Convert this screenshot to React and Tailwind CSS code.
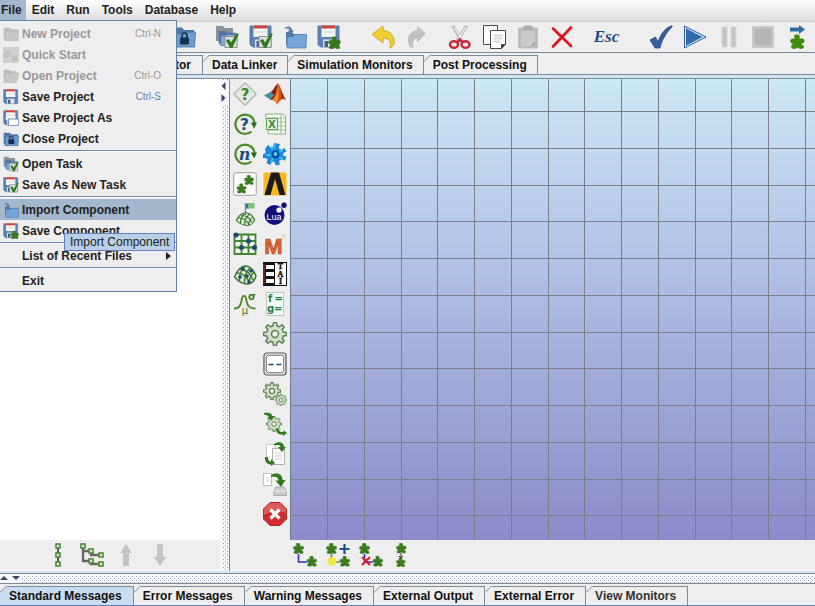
import React from "react";

/* ---------- shared drawing parts ---------- */

function Svg({ size = 24, box = 24, children }) {
  return (
    <svg width={size} height={size} viewBox={`0 0 ${box} ${box}`} aria-hidden="true" className="block shrink-0">
      {children}
    </svg>
  );
}

function Puzzle({ x = 0, y = 0, s = 1, fill = "#3a7a1e" }) {
  return (
    <path
      transform={`translate(${x} ${y}) scale(${s})`}
      fill={fill}
      stroke={fill}
      strokeWidth="0.5"
      strokeLinejoin="round"
      d="M3.800.800l1-.5h2l1 .7v1.600l-.5 1h3.200l1.200.6v2.300l-1.300.7h-1v1.300l1.600.7.300 1.800-1.300.7H8l-.9-.9H5.800l-.9.900H2l-.9-1 .4-1.700 1-.6V7.200L.9 7 .4 5.200l.8-1.400 3.300-.2-.7-1z"
    />
  );
}

function Folder({ gray, fill = "#6b9bd0", back = "#54779f" }) {
  return (
    <g>
      <path d="M1 2.500h9l2 2.500h10V20H1z" fill={gray ? "#bdbdbd" : back} />
      <path d="M3 8.500h6L10.500 7H23.500L22.500 22H3z" fill={gray ? "#c6c6c6" : fill} stroke={gray ? "#b8b8b8" : "#3f6fa8"} strokeWidth="0.8" />
    </g>
  );
}

function Disk() {
  return (
    <g>
      <path d="M1 1h21v21H3.500L1 19.500z" fill="#5c82b4" stroke="#4a6c9e" strokeWidth="0.800" />
      <rect x="4.500" y="1" width="14" height="11" fill="#f5f5f5" />
      <rect x="4.500" y="0.500" width="14" height="3" fill="#cf4436" />
      <path d="M6 7h11" stroke="#d8d8d8" strokeWidth="1.200" />
      <rect x="6" y="14.500" width="11" height="7.500" fill="#e2e2e2" />
      <rect x="7.500" y="16" width="3.500" height="6" fill="#3f5f8f" />
    </g>
  );
}

const Tick = () => (
  <g>
    <rect x="10" y="11.500" width="12" height="11" fill="#dfe3df" stroke="#8d8d8d" />
    <path d="M11 15.500l3-1.500 2 3.500L21.500 8.500l2.300.3-6.300 14h-2.500z" fill="#2f7a1c" />
  </g>
);

const Lock = () => (
  <g>
    <rect x="8" y="12.500" width="9" height="7" rx="1" fill="#17304f" />
    <path d="M10 13v-2.500a2.500 2.500 0 0 1 5 0V13" fill="none" stroke="#17304f" strokeWidth="1.600" />
  </g>
);

function GearShape({ cx, cy, r, teeth = 8, fill = "#d3ddce", stroke = "#5a8350", w = 1.2 }) {
  const pts = [];
  for (let i = 0; i < teeth; i++) {
    const a = (i / teeth) * Math.PI * 2 - Math.PI / 2;
    const step = (Math.PI * 2) / teeth;
    [[-0.3, 0.74], [-0.17, 1], [0.17, 1], [0.3, 0.74]].forEach(([o, k]) => {
      pts.push(`${(cx + Math.cos(a + o * step) * r * k).toFixed(2)},${(cy + Math.sin(a + o * step) * r * k).toFixed(2)}`);
    });
  }
  return (
    <g>
      <polygon points={pts.join(" ")} fill={fill} stroke={stroke} strokeWidth={w} strokeLinejoin="round" />
      <circle cx={cx} cy={cy} r={r * 0.3} fill="#eeeeee" stroke={stroke} strokeWidth={w} />
    </g>
  );
}

/* ---------- file and task icons, shared by menu and toolbar ---------- */

const fileIcons = {
  newGray: <Folder gray />,
  quick: (
    <g fill="#c2c2c2">
      <rect x="0" y="0" width="24" height="24" fill="#d0d0d0" />
      <path d="M1 8l7-4 5 6-6 7-6-2zM13 14l8-2v8l-7 2z" />
    </g>
  ),
  openGray: (
    <g>
      <path d="M1 2.500h9l2 2.500h8V20H1z" fill="#bdbdbd" />
      <path d="M4 9h6l1.500-1.500H24L20 22H1z" fill="#c8c8c8" stroke="#b8b8b8" strokeWidth="0.8" />
    </g>
  ),
  disk: <Disk />,
  diskAs: (
    <g>
      <Disk />
      <rect x="4" y="10" width="15" height="5" fill="#f5f5f5" />
      <path d="M8 13.500h15.500v10H8z" fill="#fff" stroke="#5c82b4" strokeWidth="1.300" />
    </g>
  ),
  lock: <g><Folder /><Lock /></g>,
  openTask: (
    <g>
      <path d="M1 1h7l1.500 2H18v13H1z" fill="#8b9199" />
      <g transform="translate(3 4) scale(.82 .75)"><Folder fill="#7fa8d6" /></g>
      <Tick />
    </g>
  ),
  saveTask: <g><Disk /><Tick /></g>,
  importComp: (
    <g>
      <path d="M3 7h6l1.500 2H20v11H3z" fill="#54779f" />
      <path d="M4 11.500h6l2-2h11.500L23 23H4z" fill="#76a5da" stroke="#4a7ab3" strokeWidth="0.8" />
      <path d="M1 4c3-4 8-3 8 1.500h2L8 9 4.500 5.500h2C6.500 3 4 2.500 1 4z" fill="#5279a8" />
    </g>
  ),
  saveComp: <g><Disk /><Puzzle x={11} y={11.5} s={1.05} fill="#35791c" /></g>,
};

const toolIcons = {
  undo: (
    <path d="M1 9.500L12 1v4.500c7 .5 12 5 11 13.500-.5 2-2 3.500-4 4 1.500-6-.5-10-7-10V18z" fill="#f0cf33" stroke="#c9a416" strokeWidth="0.9" strokeLinejoin="round" />
  ),
  redo: (
    <path d="M20.500 8.500L12.500 1.500v4C5 6 1 12 5 22l3 .5c-1-6 .5-9.500 4.500-9.500v4z" fill="#c2c2c2" stroke="#b4b4b4" strokeWidth="0.6" />
  ),
  cut: (
    <g fill="none">
      <path d="M5 1l8.500 14.500M18.500 1L9.500 15" stroke="#9a9a9a" strokeWidth="3" />
      <path d="M5.500 1.500l8 13M18 1.500l-8 13" stroke="#ececec" strokeWidth="1.600" />
      <path d="M13 14l-3.500 3M10.500 14l4 3" stroke="#c8283a" strokeWidth="2.600" />
      <ellipse cx="6" cy="19.500" rx="4" ry="3.200" stroke="#c8283a" strokeWidth="2.400" />
      <ellipse cx="17.500" cy="19.500" rx="4" ry="3.200" stroke="#c8283a" strokeWidth="2.400" />
    </g>
  ),
  copy: (
    <g fill="#fff" stroke="#4a4a4a">
      <path d="M1.500.5h14v19h-14z" />
      <path d="M8.500 5.500h15v14l-4 4h-11z" />
      <path d="M23.500 19.500h-4v4z" fill="#3c3c3c" />
      <path d="M11.500 10.500h9M11.500 13.500h9M11.500 16.500h7" stroke="#d8d8d8" strokeWidth="2" />
    </g>
  ),
  paste: (
    <g>
      <rect x="2" y="2.500" width="20" height="21" rx="1.500" fill="#bdbdbd" />
      <rect x="7" y="0.500" width="10" height="5" rx="1.500" fill="#b0b0b0" />
      <path d="M5 6h14v15H5z" fill="#cbcbcb" />
      <path d="M19 16v5h-5z" fill="#a9a9a9" />
    </g>
  ),
  remove: <path d="M3 3.500l18 17.500M21 2.500L3 21.500" stroke="#e60f1c" strokeWidth="2.600" strokeLinecap="round" fill="none" />,
  check: (
    <path d="M1 15l5.500-3 2.500 5C12 9 15.500 3 23 .8l.3.700C18 7 13 14 11 23H6z" fill="#3c5d9e" stroke="#2b4480" strokeWidth="0.8" />
  ),
  play: (
    <g>
      <path d="M1.500 1v22L23 12z" fill="#dcebf6" stroke="#2d6097" />
      <path d="M3 3.300v17.400L19.500 12z" fill="#2f6cad" />
    </g>
  ),
  pause: <path d="M5 2h5v20H5zM14 2h5v20h-5z" fill="#c3c3c3" stroke="#d6d6d6" />,
  stop: <g><rect x="1" y="1" width="22" height="22" fill="#c8c8c8" /><rect x="3.500" y="3.500" width="17" height="17" fill="#b5b5b5" /></g>,
  nextComp: (
    <g>
      <path d="M5 2.500h9V0l6 4.500-6 4.500V6.500H5z" fill="#2f6c9f" />
      <Puzzle x={5} y={9.500} s={1.2} fill="#3f8a10" />
    </g>
  ),
};

/* ---------- palette icons ---------- */

const ringText = (char, italic) => (
  <g>
    <path d="M18.500 5A9.700 9.700 0 1 0 18.500 19.500" fill="none" stroke="#4f8a2e" strokeWidth="2.300" />
    <path d="M17.500 4.200c2.700 1.800 3.800 4 3.900 7" fill="none" stroke="#4f8a2e" strokeWidth="2.300" />
    <path d="M17.800 10.500h6.200l-2.800 6z" fill="#2f6a1a" />
    <text x="11.500" y="17.500" textAnchor="middle" fill="#1d4f80" fontSize="16" fontWeight="bold" fontStyle={italic ? "italic" : "normal"} fontFamily={italic ? "DejaVu Serif, serif" : "DejaVu Sans, sans-serif"}>{char}</text>
  </g>
);

const meshDome = (
  <g stroke="#3d7a2c" fill="none">
    <path d="M1.500 15C4 9 8 4 12.500 4S21 9 23 14c-1 5-5 8-9 8S5 19 1.500 15z" fill="#dde8d8" strokeWidth="1.500" />
    <path d="M4 11c5 0 10 4 13 10M7 7c6 1 11 5 13 11M12.500 4C8 8 6 12 6.500 18.500M17 6c-4 4-6 9-5.500 16M21 10c-3 3-5 7-5 12" strokeWidth="1.400" />
  </g>
);

const paletteLeft = [
  ["Help", (
    <g>
      <path d="M12 .8L23.200 12 12 23.200.8 12z" fill="#e6e8e6" stroke="#b4bab4" strokeWidth="1.400" strokeLinejoin="round" />
      <text x="12" y="17.500" textAnchor="middle" fill="#3f8420" fontSize="15" fontWeight="bold" fontFamily="DejaVu Sans, sans-serif">?</text>
    </g>
  )],
  ["Conditional loop", ringText("?", false)],
  ["Counted loop", ringText("n", true)],
  ["Component group", (
    <g>
      <rect x="0.700" y="0.700" width="22.600" height="22.600" rx="2" fill="#fafafa" stroke="#a0a0a0" />
      <Puzzle x={11} y={3} s={0.82} fill="#3b7a22" />
      <Puzzle x={3.5} y={11.5} s={0.82} fill="#3b7a22" />
    </g>
  )],
  ["Optimization", (
    <g>
      <g transform="translate(2 8) scale(.85 .7)">{meshDome}</g>
      <path d="M12.500 1v12" stroke="#6d8a9c" strokeWidth="1.400" />
      <path d="M13 1.500h3v5h-3z" fill="#3a6fa8" />
      <path d="M15 1h6.500v5.500H15z" fill="#7cc576" />
    </g>
  )],
  ["Design of experiments", (
    <g>
      <path d="M1.500 2.500h21v19.500h-21zM8.500 2.500V22M15.500 2.500V22M1.500 9h21M1.500 15.500h21" fill="#f3f6f0" stroke="#3f8430" strokeWidth="1.800" />
      <g fill="#1d4a75">
        <circle cx="3" cy="3" r="2.500" /><circle cx="15.500" cy="9" r="2.500" /><circle cx="8.500" cy="15.500" r="2.500" /><circle cx="21.500" cy="15.500" r="2.500" />
      </g>
    </g>
  )],
  ["Response surface", (
    <g>
      {meshDome}
      <g fill="#1d4a75"><circle cx="10" cy="7" r="1.800" /><circle cx="18" cy="9" r="1.800" /><circle cx="7" cy="15" r="1.800" /><circle cx="14" cy="14" r="1.800" /><circle cx="16" cy="20" r="1.800" /></g>
    </g>
  )],
  ["Reliability", (
    <g>
      <path d="M1 16.500c6 0 7-4 8-10 .5-3.500 3.500-3.500 4 0 1 6 2 10 9.500 10" fill="none" stroke="#4f8a2e" strokeWidth="1.900" />
      <text x="19" y="8" textAnchor="middle" fill="#3f7a24" fontSize="10" fontWeight="bold" fontFamily="DejaVu Sans, sans-serif">σ</text>
      <text x="12" y="21.500" textAnchor="middle" fill="#3f7a24" fontSize="10" fontFamily="DejaVu Sans, sans-serif">μ</text>
    </g>
  )],
];

const paletteRight = [
  ["Matlab", (
    <g>
      <path d="M1 13.500l6.500-3.500 3.500 3-4 4.500z" fill="#3f93a5" />
      <path d="M7.500 10c3-1 4.500-7 7.500-8.500l-3 14L9 18l-2-.5 4-4.500z" fill="#7a2318" />
      <path d="M15 1.500c2 1 4 10 8 16.500-3.500-2.500-5.500-.5-9 4.500-1-2.500-2.500-4-5-4.500 4-3 4-13 6-16.500z" fill="#d8501e" />
      <path d="M15 2c.5 5-1 12-5.500 16 2.500.5 3.500 2 4.500 4C16 16 16.500 8 15 2z" fill="#f0932b" />
      <path d="M17 6c2 5 3.500 9 6 12-2-1.500-3-1.500-4.500-.5C18.500 13 18 10 17 6z" fill="#96281a" />
    </g>
  )],
  ["Excel", (
    <g>
      <path d="M2.500 2h17l3 2v18h-17z" fill="#f5faf3" stroke="#86b67c" />
      <path d="M5 6h17M5 18h17M13 10h9M13 14h9M18 3v18" stroke="#9cc795" strokeWidth="1.200" />
      <rect x="3.500" y="6.500" width="11" height="11" fill="#e2f0dd" stroke="#5f9c52" />
      <text x="9" y="16" textAnchor="middle" fill="#2f7a2a" fontSize="11" fontWeight="bold" fontFamily="Liberation Sans, sans-serif">X</text>
    </g>
  )],
  ["Workbench", (
    <g>
      <path d="M10 5l1-4 6 1-1.500 4 3 2L21 6l2.500 3-3.500 2.500v2l3.500 1-1.500 4-4-1-2 1.500 1 3.500-4 1-2-4-2 .5-2 3-3.500-2 1-3.500-2-1.500-4 .5V13l4-2V9L2 7l3-4 3 2.500z" fill="#1f86dc" />
      <path d="M12 2l-1 5M3 13h5M8 5l1.500 3M20 8l-4 2M8 20l2-4M20 17l-4-2" stroke="#2bc6ec" strokeWidth="1.800" />
      <circle cx="12.500" cy="12.500" r="4" fill="#1746a0" /><circle cx="12.500" cy="12" r="2" fill="#43d1ec" />
    </g>
  )],
  ["Ansys", (
    <g>
      <rect x="0.500" y="0.500" width="23" height="23" rx="1.500" fill="#f9b91c" />
      <path d="M8 .5h8l6.500 22.500h-6L12 7 7.500 23h-6z" fill="#1a1a1a" />
    </g>
  )],
  ["Lua", (
    <g>
      <circle cx="11.500" cy="13" r="10" fill="#10107a" />
      <circle cx="21" cy="3.200" r="2.700" fill="#10107a" />
      <circle cx="16" cy="8" r="2.600" fill="#fff" />
      <text x="11" y="17.500" textAnchor="middle" fill="#fff" fontSize="9" fontFamily="Liberation Sans, sans-serif">Lua</text>
    </g>
  )],
  ["Mathcad", (
    <g>
      <circle cx="20.500" cy="4.500" r="2.600" fill="#f3dcc8" />
      <text x="10.500" y="21.500" textAnchor="middle" fill="#db6a33" stroke="#b04a22" strokeWidth="0.7" fontSize="22" fontWeight="bold" fontFamily="Liberation Sans, sans-serif">M</text>
    </g>
  )],
  ["Tai", (
    <g>
      <rect x="0.500" y="0.500" width="23" height="23" fill="#fff" stroke="#111" />
      <path d="M0 0h12v24H0z" fill="#111" />
      <path d="M3 3h8v4H3zM3 10h8v4H3zM3 17h8v4H3z" fill="#fff" />
      <path d="M1 2v20" stroke="#b8423c" strokeWidth="1" />
      <g fill="#111" stroke="#111" strokeWidth="0.400" fontSize="8" fontWeight="bold" textAnchor="middle" fontFamily="Liberation Serif, serif">
        <text x="17.500" y="7">T</text><text x="17.500" y="14.500">A</text><text x="17.500" y="22">I</text>
      </g>
    </g>
  )],
  ["Formula", (
    <g>
      <rect x="3.500" y="0.500" width="17" height="23" fill="#f4faf3" stroke="#c0c8be" />
      <g fill="#1d8048" fontSize="10" fontWeight="bold" fontFamily="DejaVu Sans, sans-serif">
        <text x="5" y="9.500">f</text><text x="11.500" y="9.500">=</text><text x="4" y="19.500">g</text><text x="11" y="19.500">=</text>
      </g>
    </g>
  )],
  ["Process", <GearShape cx={12} cy={12} r={11.5} teeth={8} w={1.5} />],
  ["Placeholder", (
    <g>
      <rect x="1" y="1" width="22" height="22" rx="3" fill="#fff" stroke="#505050" strokeWidth="1.200" />
      <rect x="3.200" y="3.200" width="17.600" height="17.600" rx="2" fill="#fdfdfd" stroke="#606060" strokeWidth="1" />
      <path d="M5.500 12.500h5M13.500 12.500h5" stroke="#1d4a75" strokeWidth="1.600" />
    </g>
  )],
  ["Batch process", <g><GearShape cx={9} cy={9} r={8.5} teeth={8} /><GearShape cx={18} cy={18} r={5.8} teeth={8} w={0.9} /></g>],
  ["Process flow", (
    <g>
      <GearShape cx={11} cy={12} r={7.5} teeth={8} w={1} />
      <path d="M1 1c5-1 8 0 8 3h2L8.500 8.500 3.500 5.500H6C5.500 3.500 4 3 1 2.500z" fill="#2f7a1c" />
      <path d="M13 16.500h2.500c.5 3 2.500 4 5 3.500v-2l3.500 3-4 3v-1.500c-4 .5-7-1.500-7-6z" fill="#2f7a1c" />
    </g>
  )],
  ["Copy files", (
    <g>
      <path d="M3.500 2.500h9v18h-9z" fill="#fff" stroke="#c5c5c5" />
      <path d="M9.500 6.500h12v16h-12z" fill="#fafafa" stroke="#b0b0b0" />
      <path d="M12 11h7M12 14h7M12 17h7" stroke="#cfcfcf" />
      <path d="M11 2c4-3 10-2 10 3h2l-4 5-4-5h2.500C17.500 3 15 2.500 11 3.500z" fill="#2f7a1c" />
      <path d="M2 15h3c0 3 1 4.500 3 4.500V17l4 4-4 3v-1.500c-4 0-6.500-3-6-7.500z" fill="#2f7a1c" />
    </g>
  )],
  ["Save files", (
    <g>
      <path d="M.5 1.500h8v12h-8z" fill="#fff" stroke="#c0c0c0" />
      <path d="M3 6h3M3 9h3" stroke="#cfcfcf" />
      <path d="M8 3c6-3 11.500-1 11.500 5h3l-4.500 7-5.500-6.500h3C15.500 5 13 4 8 5z" fill="#2f7a1c" />
      <path d="M13 15h8l2.500 4v4.500H11V19z" fill="#cdcdcd" stroke="#9d9d9d" strokeWidth="0.800" />
      <path d="M11 19h12.500" stroke="#eee" />
    </g>
  )],
  ["Stop", (
    <g>
      <path d="M7 .5h10L23.500 7v10L17 23.500H7L.5 17V7z" fill="#cf2b30" stroke="#b0262b" />
      <path d="M1 7l6-6h10l6 6v4c-8-3-15-2-22 2z" fill="#dc5a58" />
      <path d="M7.500 7.500l9 9M16.500 7.500l-9 9" stroke="#fff" strokeWidth="3.200" />
    </g>
  )],
];

/* ---------- lower bar icons ---------- */

const node = (x, y) => <rect key={`${x}-${y}`} x={x} y={y} width="4" height="4" fill="#d8ecd0" stroke="#4f8a3a" strokeWidth="1.600" />;

const treeIcons = [
  ["Flat view", <g><path d="M12 3v18" stroke="#555" strokeWidth="2" />{node(10, 1)}{node(10, 10)}{node(10, 19)}</g>],
  ["Tree view", (
    <g>
      <path d="M3 3v15h8M3 8h8M11 8v4h9M11 18v3h9" fill="none" stroke="#666" strokeWidth="2.400" />
      {node(1, 1)}{node(9, 6)}{node(9, 16)}{node(19, 10)}{node(19, 19)}
    </g>
  )],
  ["Move up", <path d="M12 1l6 9h-3v13H9V10H6z" fill="#c4c4c4" />],
  ["Move down", <path d="M12 23l6-9h-3V1H9v13H6z" fill="#c4c4c4" />],
];

const linkIcons = [
  ["Link components", <g><path d="M5.500 11v8H14" fill="none" stroke="#3430b8" strokeWidth="1.600" /><Puzzle s={0.9} /><Puzzle x={13.500} y={13} s={0.87} /></g>],
  ["Insert component", (
    <g>
      <path d="M5.500 10v9H14" fill="none" stroke="#777" strokeWidth="1.600" />
      <Puzzle s={0.9} /><Puzzle x={13.500} y={13} s={0.87} />
      <circle cx="6" cy="18.500" r="4.600" fill="#f1e74a" />
      <path d="M18.500 1v10M13.500 6h10" stroke="#1d5286" strokeWidth="2.200" />
    </g>
  )],
  ["Remove link", (
    <g>
      <path d="M5.500 11v8H14" fill="none" stroke="#3430b8" strokeWidth="1.600" />
      <Puzzle s={0.9} /><Puzzle x={13.500} y={13} s={0.87} />
      <path d="M3 14l8 8M11 14l-8 8" stroke="#d41e34" strokeWidth="2.200" />
    </g>
  )],
  ["Align vertically", (
    <g>
      <path d="M9 10v5M7 13l2 2 2-2" stroke="#222" fill="none" />
      <Puzzle x={4} y={0} s={0.86} /><Puzzle x={4} y={14.5} s={0.78} />
    </g>
  )],
];

/* ---------- controls ---------- */

function IconButton({ label, children, className = "h-[30px] w-[34px]" }) {
  return (
    <button type="button" aria-label={label} className={`flex shrink-0 items-center justify-center ${className}`}>
      {children}
    </button>
  );
}

function ToolGroup({ items, icons }) {
  return (
    <div className="flex">
      {items.map(([label, key]) => (
        <IconButton key={label} label={label}><Svg>{icons[key]}</Svg></IconButton>
      ))}
    </div>
  );
}

function Tab({ label, selected, muted, className = "pr-[11px] pl-[9px]" }) {
  const tone = selected ? "bg-[#c8ddf2]" : "bg-[#eeeeee]";
  return (
    <button
      type="button"
      role="tab"
      aria-selected={!!selected}
      className={`relative flex h-[19px] shrink-0 items-center border-t border-r border-[#7a8a99] text-[12px] font-bold whitespace-nowrap ${tone} ${muted ? "text-[#333333]" : "text-[#111111]"} ${className}`}
    >
      <svg width="7" height="7" aria-hidden="true" className="absolute -top-px left-0">
        <path d="M0 0h7L0 7z" fill="#eeeeee" />
        <path d="M0 6.500L6.500 0" stroke="#7a8a99" fill="none" />
      </svg>
      {label}
    </button>
  );
}

function DotTexture({ id }) {
  return (
    <svg aria-hidden="true" className="block h-full w-full">
      <defs>
        <pattern id={id} width="4" height="4" patternUnits="userSpaceOnUse">
          <rect x="0" y="0" width="1" height="1" fill="#8793a0" />
          <rect x="2" y="2" width="1" height="1" fill="#8793a0" />
        </pattern>
      </defs>
      <rect width="100%" height="100%" fill={`url(#${id})`} />
    </svg>
  );
}

const GRID_STEP = 36.75;
const gridLines = Array.from({ length: 60 }, (_, i) => i);

function Canvas() {
  return (
    <div className="min-h-0 min-w-0 flex-1 overflow-hidden border-l border-[#6c7d90] bg-linear-to-b from-[#cce7f5] to-[#8c8acb]">
      <svg aria-label="Workflow canvas" className="block h-full w-full" shapeRendering="crispEdges" fill="#7b8088">
        {gridLines.map((i) => (
          <rect key={`v${i}`} x={Math.round(36 + i * GRID_STEP)} y="0" width="1" height="100%" />
        ))}
        {gridLines.map((i) => (
          <rect key={`h${i}`} x="0" y={Math.round(32 + i * GRID_STEP)} width="100%" height="1" />
        ))}
      </svg>
    </div>
  );
}

const menuGroups = [
  [
    { label: "New Project", icon: "newGray", keys: "Ctrl-N", disabled: true },
    { label: "Quick Start", icon: "quick", disabled: true },
    { label: "Open Project", icon: "openGray", keys: "Ctrl-O", disabled: true },
    { label: "Save Project", icon: "disk", keys: "Ctrl-S" },
    { label: "Save Project As", icon: "diskAs" },
    { label: "Close Project", icon: "lock" },
  ],
  [
    { label: "Open Task", icon: "openTask" },
    { label: "Save As New Task", icon: "saveTask" },
  ],
  [
    { label: "Import Component", icon: "importComp", active: true },
    { label: "Save Component", icon: "saveComp" },
  ],
  [{ label: "List of Recent Files", submenu: true }],
  [{ label: "Exit" }],
];

function FileMenu() {
  return (
    <div role="menu" aria-label="File" className="absolute top-5 left-0 z-10 w-[177px] border-t border-r border-b border-[#6382a8] bg-[#eeeeee] pt-0.5">
      {menuGroups.map((group, g) => (
        <React.Fragment key={g}>
          {g > 0 && <div role="separator" className="h-1 pt-px"><div className="h-0.5 border-t border-[#6c8ab3] bg-white" /></div>}
          {group.map((item) => (
            <button
              key={item.label}
              type="button"
              role="menuitem"
              disabled={item.disabled}
              className={`flex h-[21px] w-full items-center gap-[3px] pr-[5px] pl-[3px] text-left text-[12px] font-bold ${item.disabled ? "text-[#999999]" : "text-[#222222]"} ${item.active ? "bg-[#a3b8cc]" : ""}`}
            >
              <span className="w-4">{item.icon && <Svg size={16}>{fileIcons[item.icon]}</Svg>}</span>
              <span className="whitespace-nowrap">{item.label}</span>
              {item.keys && (
                <span className={`ml-auto pr-2.5 text-[10px] font-normal ${item.disabled ? "text-[#999999]" : "text-[#6382bf]"}`}>{item.keys}</span>
              )}
              {item.submenu && (
                <svg width="5" height="8" aria-hidden="true" className="ml-auto"><path d="M0 0l5 4-5 4z" fill="#222" /></svg>
              )}
            </button>
          ))}
        </React.Fragment>
      ))}
      <div role="tooltip" className="absolute top-[212px] left-16 h-[18px] border border-[#6382bf] bg-[#b8cfe5] px-[5px] text-[12px] leading-4 whitespace-nowrap text-[#222222]">
        Import Component
      </div>
    </div>
  );
}

export default function App() {
  return (
    <div className="relative flex h-screen flex-col overflow-hidden bg-[#eeeeee] font-['Liberation_Sans',Arial,sans-serif] text-[12px] text-[#222222]">
      <nav aria-label="Main menu" className="flex h-[22px] shrink-0 border-b border-[#cccccc] bg-linear-to-b from-white to-[#dcdcdc] font-bold">
        <button type="button" aria-expanded="true" className="h-5 bg-[#a3b8cc] pr-1 pl-px">File</button>
        {["Edit", "Run", "Tools", "Database", "Help"].map((name) => (
          <button key={name} type="button" className="h-5 px-1.5">{name}</button>
        ))}
      </nav>
      <FileMenu />

      <div role="toolbar" aria-label="Project tools" className="flex h-[31px] shrink-0 overflow-hidden border-b border-[#7a8a99] pl-[31px]">
        <ToolGroup icons={fileIcons} items={[["New project", "newGray"], ["Quick start", "quick"], ["Open project", "openGray"], ["Save project", "disk"], ["Close project", "lock"]]} />
        <div className="ml-[9px]">
          <ToolGroup icons={fileIcons} items={[["Open task", "openTask"], ["Save as new task", "saveTask"], ["Import component", "importComp"], ["Save component", "saveComp"]]} />
        </div>
        <div className="ml-5"><ToolGroup icons={toolIcons} items={[["Undo", "undo"], ["Redo", "redo"]]} /></div>
        <div className="ml-[9px]"><ToolGroup icons={toolIcons} items={[["Cut", "cut"], ["Copy", "copy"], ["Paste", "paste"], ["Delete", "remove"]]} /></div>
        <button type="button" className="ml-[10px] h-[30px] w-[35px] font-['Liberation_Serif',serif] text-[17px] font-bold text-[#1d4a80] italic">Esc</button>
        <div className="ml-5"><ToolGroup icons={toolIcons} items={[["Validate", "check"], ["Run", "play"], ["Pause", "pause"], ["Stop", "stop"], ["Run component", "nextComp"]]} /></div>
      </div>

      <div role="tablist" aria-label="Views" className="flex h-[22px] shrink-0 border-b border-[#7a8a99] pt-0.5">
        <Tab label="Editor" className="w-[203px] justify-end pr-[11px]" />
        {["Data Linker", "Simulation Monitors", "Post Processing"].map((name) => (
          <Tab key={name} label={name} className="pr-2.5 pl-[9px]" />
        ))}
      </div>
      <div className="h-1 shrink-0 border-b border-[#7a8a99] bg-[#d3e4f1]" />

      <main className="flex min-h-0 flex-1">
        <section aria-label="Project tree" className="flex w-[220px] shrink-0 flex-col border-b border-white">
          <div className="flex-1 bg-white" />
          <div className="flex h-[30px] pl-[41px]">
            {treeIcons.map(([label, art]) => (
              <IconButton key={label} label={label}><Svg>{art}</Svg></IconButton>
            ))}
          </div>
        </section>

        <div role="separator" aria-orientation="vertical" className="relative w-2.5 shrink-0 border-r border-[#7a8a99] bg-[#f6f7f8] pl-[3px]">
          <DotTexture id="dots-vertical" />
          <svg width="8" height="24" aria-hidden="true" className="absolute top-0.5 left-0">
            <rect width="8" height="24" fill="#f6f7f8" />
            <path d="M5.500 1v8l-4-4z M1.500 13v8l4-4z" fill="#36476b" />
          </svg>
        </div>

        <section aria-label="Workflow" className="flex min-w-0 flex-1 flex-col border-b border-white">
          <div className="flex min-h-0 flex-1">
            {[paletteLeft, paletteRight].map((column, c) => (
              <div key={c} className="flex w-[30px] shrink-0 flex-col">
                {column.map(([label, art]) => (
                  <IconButton key={label} label={label} className="h-[30px] w-[30px]"><Svg>{art}</Svg></IconButton>
                ))}
              </div>
            ))}
            <Canvas />
          </div>
          <div className="flex h-[30px] shrink-0 pl-[58px]">
            {linkIcons.map(([label, art]) => (
              <IconButton key={label} label={label} className="h-[30px] w-[33px]"><Svg>{art}</Svg></IconButton>
            ))}
          </div>
        </section>
      </main>

      <div className="h-[3px] shrink-0 border-b border-[#7a8a99] bg-[#d3e4f1]" />
      <div role="separator" aria-orientation="horizontal" className="relative h-2.5 shrink-0 border-b border-[#7a8a99] bg-[#f6f7f8] pt-0.5">
        <DotTexture id="dots-horizontal" />
        <svg width="22" height="9" aria-hidden="true" className="absolute top-0 left-0">
          <rect width="22" height="9" fill="#f6f7f8" />
          <path d="M0 6h8L4 2z M12 2h8l-4 4z" fill="#36476b" />
        </svg>
      </div>

      <div role="tablist" aria-label="Messages" className="flex h-[22px] shrink-0 border-b border-[#6382bf] pt-0.5">
        <Tab label="Standard Messages" selected />
        <Tab label="Error Messages" />
        <Tab label="Warning Messages" />
        <Tab label="External Output" />
        <Tab label="External Error" />
        <Tab label="View Monitors" muted />
      </div>
    </div>
  );
}
